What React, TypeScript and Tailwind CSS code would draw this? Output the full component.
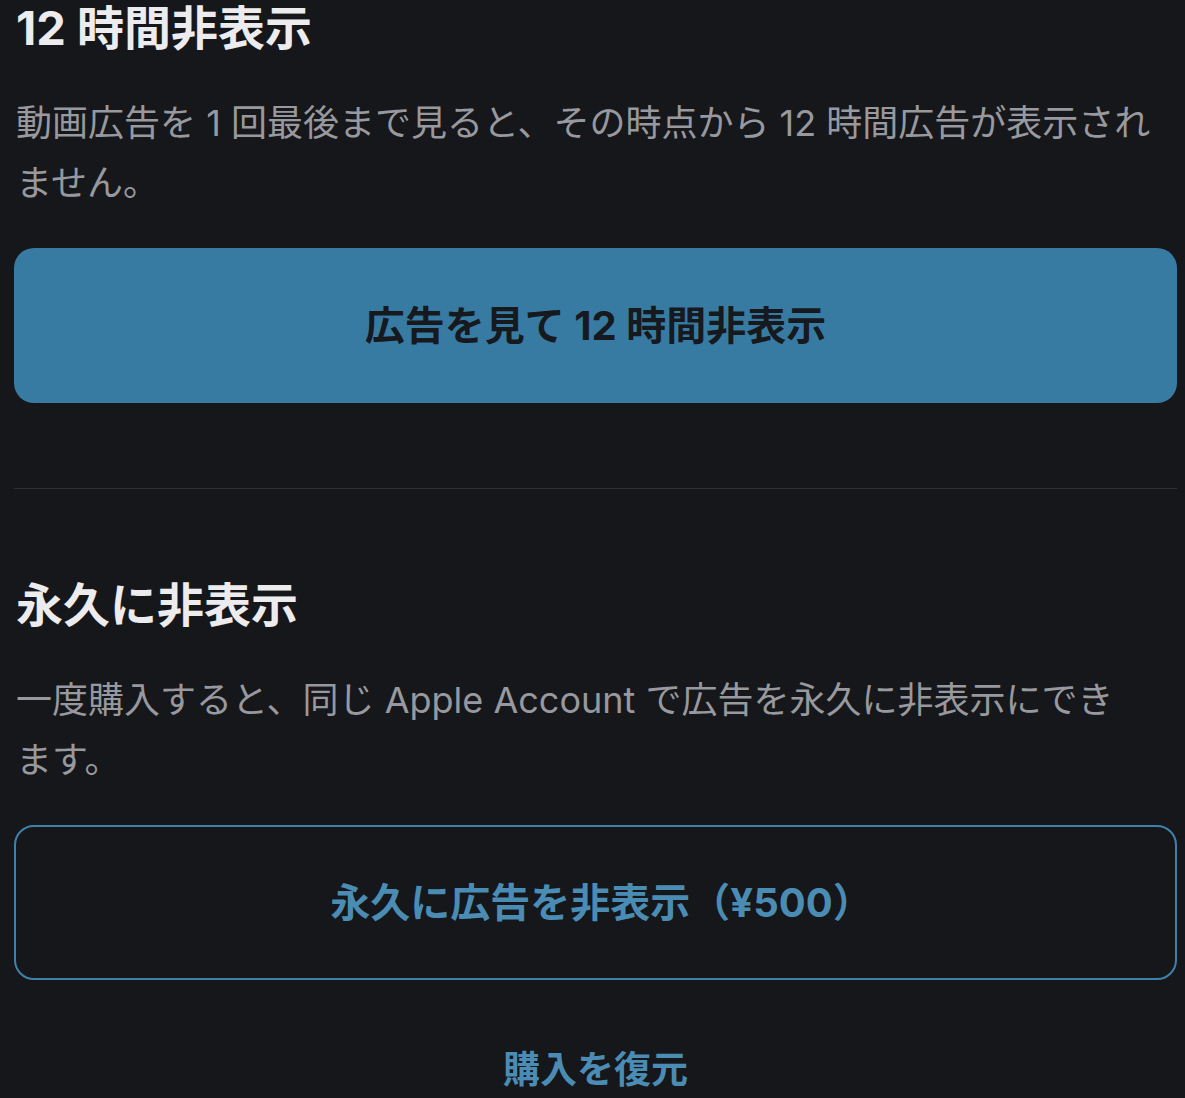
export default function App() {
  const font = { fontFamily: '"Inter", "Noto Sans CJK JP", sans-serif' }
  return (
    <div className="min-h-screen bg-[#16171a] pl-[14px] pr-[8px] [text-spacing-trim:space-all]" style={font}>
      <h1 className="pl-[2px] text-[47px] leading-[56px] font-bold text-[#ececee]">12 時間非表示</h1>
      <p className="mt-[37px] pl-[2px] pr-[7px] text-[36px] leading-[60px] text-[#98999e]">
        動画広告を 1 回最後まで見ると、その時点から 12 時間広告が表示されません。
      </p>
      <button className="mt-[35px] flex h-[155px] w-full items-center justify-center rounded-[20px] bg-[#387ba2] text-[40px] font-bold text-[#16191d]">
        広告を見て 12 時間非表示
      </button>

      <div className="mt-[85px] h-px w-full bg-[#2e3035]" />

      <h2 className="mt-[88px] pl-[2px] text-[47px] leading-[56px] font-bold text-[#ececee]">永久に非表示</h2>
      <p className="mt-[37px] pl-[2px] pr-[40px] text-[36px] leading-[60px] text-[#98999e]">
        一度購入すると、同じ Apple Account で広告を永久に非表示にできます。
      </p>
      <button className="mt-[35px] flex h-[155px] w-full items-center justify-center rounded-[20px] border-2 border-[#3f82a9] pl-[12px] text-[40px] font-bold text-[#4a8cb3]">
        永久に広告を非表示（¥500）
      </button>

      <div className="mt-[60px] flex justify-center">
        <button className="text-[37px] leading-[60px] font-bold text-[#4a8cb3]">購入を復元</button>
      </div>
    </div>
  )
}
